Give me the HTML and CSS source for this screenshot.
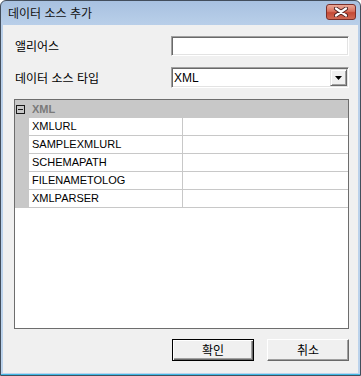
FILE: index.html
```html
<!DOCTYPE html>
<html lang="ko">
<head>
<meta charset="utf-8">
<link rel="stylesheet" href="styles.css">
</head>
<body>
<div class="window">
  <div class="titlebar">
    <span class="title">데이터 소스 추가</span>
    <div class="close-btn">
      <svg width="14" height="10" viewBox="0 0 14 10">
        <path d="M2 1.5 L12 8.5 M12 1.5 L2 8.5" stroke="#4a2020" stroke-width="4" stroke-linecap="round"/>
        <path d="M2 1.5 L12 8.5 M12 1.5 L2 8.5" stroke="#ffffff" stroke-width="2.2" stroke-linecap="round"/>
      </svg>
    </div>
  </div>
  <div class="client">
    <div class="form-row row-alias">
      <label class="label">앨리어스</label>
      <div class="textbox"></div>
    </div>
    <div class="form-row row-type">
      <label class="label">데이터 소스 타입</label>
      <div class="combo">
        <span class="combo-text">XML</span>
        <div class="combo-btn">
          <svg width="7" height="4" viewBox="0 0 7 4"><path d="M0 0 H7 L3.5 4 Z" fill="#000"/></svg>
        </div>
      </div>
    </div>
    <div class="grid">
      <div class="category">
        <div class="expander"><span class="minus"></span></div>
        <span class="cat-text">XML</span>
      </div>
      <div class="prop"><div class="gutter"></div><div class="pname">XMLURL</div><div class="pvalue"></div></div>
      <div class="prop"><div class="gutter"></div><div class="pname">SAMPLEXMLURL</div><div class="pvalue"></div></div>
      <div class="prop"><div class="gutter"></div><div class="pname">SCHEMAPATH</div><div class="pvalue"></div></div>
      <div class="prop"><div class="gutter"></div><div class="pname">FILENAMETOLOG</div><div class="pvalue"></div></div>
      <div class="prop"><div class="gutter"></div><div class="pname">XMLPARSER</div><div class="pvalue"></div></div>
    </div>
    <div class="buttons">
      <div class="btn btn-default">확인</div>
      <div class="btn">취소</div>
    </div>
  </div>
</div>
</body>
</html>
```

FILE: styles.css
```css
html, body {
  margin: 0;
  padding: 0;
  background: #ffffff;
}

.window {
  width: 361px;
  height: 376px;
  box-sizing: border-box;
  border: 1px solid #434e5c;
  border-radius: 6px 6px 0 0;
  background: linear-gradient(#a8c1e0 0px, #b9cfe9 24px, #bcd3ec 100%);
  padding: 0 2px 2px 2px;
  display: flex;
  flex-direction: column;
  box-shadow: inset 0 -1px 0 #3fb9e6;
}

.titlebar {
  height: 24px;
  flex: none;
  display: flex;
  align-items: center;
  justify-content: space-between;
  padding: 0 2px 0 5px;
}

.title {
  font-family: "Noto Sans CJK KR", "Liberation Sans", sans-serif;
  font-size: 12px;
  color: #111;
  margin-top: -1px;
}

.close-btn {
  width: 30px;
  height: 16px;
  box-sizing: border-box;
  border: 1px solid #7a2f2a;
  border-radius: 3px;
  background: linear-gradient(#e9a898 0%, #d9735f 45%, #c54a36 55%, #cf6a55 100%);
  display: flex;
  align-items: center;
  justify-content: center;
  margin-top: -2px;
}

.client {
  flex: 1;
  background: #f0f0f0;
  display: flex;
  flex-direction: column;
  padding: 11px 9px 12px 11px;
  font-family: "Noto Sans CJK KR", "Liberation Sans", sans-serif;
  font-size: 12px;
  color: #000;
}

.form-row {
  display: flex;
  align-items: center;
  justify-content: space-between;
}

.row-type {
  margin-top: 11px;
}

.label {
  padding-left: 1px;
  line-height: 14px;
}

.textbox {
  width: 178px;
  height: 20px;
  box-sizing: border-box;
  background: #fff;
  border-top: 1px solid #a0a0a0;
  border-left: 1px solid #a0a0a0;
  border-right: 1px solid #ffffff;
  border-bottom: 1px solid #ffffff;
  box-shadow: inset 1px 1px 0 #696969, inset -1px -1px 0 #e3e3e3;
}

.combo {
  width: 178px;
  height: 21px;
  box-sizing: border-box;
  background: #fff;
  border-top: 1px solid #a0a0a0;
  border-left: 1px solid #a0a0a0;
  border-right: 1px solid #ffffff;
  border-bottom: 1px solid #ffffff;
  box-shadow: inset 1px 1px 0 #696969, inset -1px -1px 0 #e3e3e3;
  display: flex;
  align-items: center;
  justify-content: space-between;
  padding: 1px 1px 1px 2px;
}

.combo-text {
  font-family: "Liberation Sans", sans-serif;
  font-size: 12px;
  color: #000;
}

.combo-btn {
  width: 17px;
  height: 17px;
  box-sizing: border-box;
  background: #f0f0f0;
  border-top: 1px solid #e3e3e3;
  border-left: 1px solid #e3e3e3;
  border-right: 1px solid #696969;
  border-bottom: 1px solid #696969;
  box-shadow: inset 1px 1px 0 #ffffff, inset -1px -1px 0 #a0a0a0;
  display: flex;
  align-items: center;
  justify-content: center;
}

.grid {
  margin-top: 11px;
  height: 230px;
  box-sizing: border-box;
  border: 1px solid #6d6d6d;
  background: #fff;
  font-family: "Liberation Sans", sans-serif;
  font-size: 11px;
}

.category {
  height: 18px;
  background: #c8c8c8;
  display: flex;
  align-items: center;
}

.expander {
  width: 17px;
  display: flex;
  justify-content: flex-start;
  padding-left: 1px;
  box-sizing: border-box;
}

.minus {
  width: 9px;
  height: 9px;
  box-sizing: border-box;
  border: 1px solid #1a1a1a;
  position: relative;
  display: block;
}

.minus::after {
  content: "";
  position: absolute;
  left: 1px;
  right: 1px;
  top: 3px;
  height: 1px;
  background: #1a1a1a;
}

.cat-text {
  font-weight: bold;
  color: #7a7a7a;
}

.prop {
  height: 18px;
  display: flex;
}

.gutter {
  width: 14px;
  flex: none;
  background: #c8c8c8;
}

.pname {
  width: 154px;
  flex: none;
  box-sizing: border-box;
  border-bottom: 1px solid #c8c8c8;
  border-right: 1px solid #c8c8c8;
  padding-left: 3px;
  line-height: 17px;
  color: #000;
  white-space: nowrap;
}

.pvalue {
  flex: 1;
  border-bottom: 1px solid #c8c8c8;
}

.buttons {
  margin-top: 10px;
  display: flex;
  justify-content: flex-end;
  gap: 13px;
}

.btn {
  width: 82px;
  height: 22px;
  box-sizing: border-box;
  background: #f0f0f0;
  border-top: 1px solid #ffffff;
  border-left: 1px solid #ffffff;
  border-right: 1px solid #696969;
  border-bottom: 1px solid #696969;
  box-shadow: inset -1px -1px 0 #a0a0a0;
  display: flex;
  align-items: center;
  justify-content: center;
  font-size: 12px;
  line-height: 14px;
}

.btn-default {
  border: 1px solid #000000;
  box-shadow: inset 1px 1px 0 #ffffff, inset -1px -1px 0 #696969, inset -2px -2px 0 #a0a0a0;
}
```
